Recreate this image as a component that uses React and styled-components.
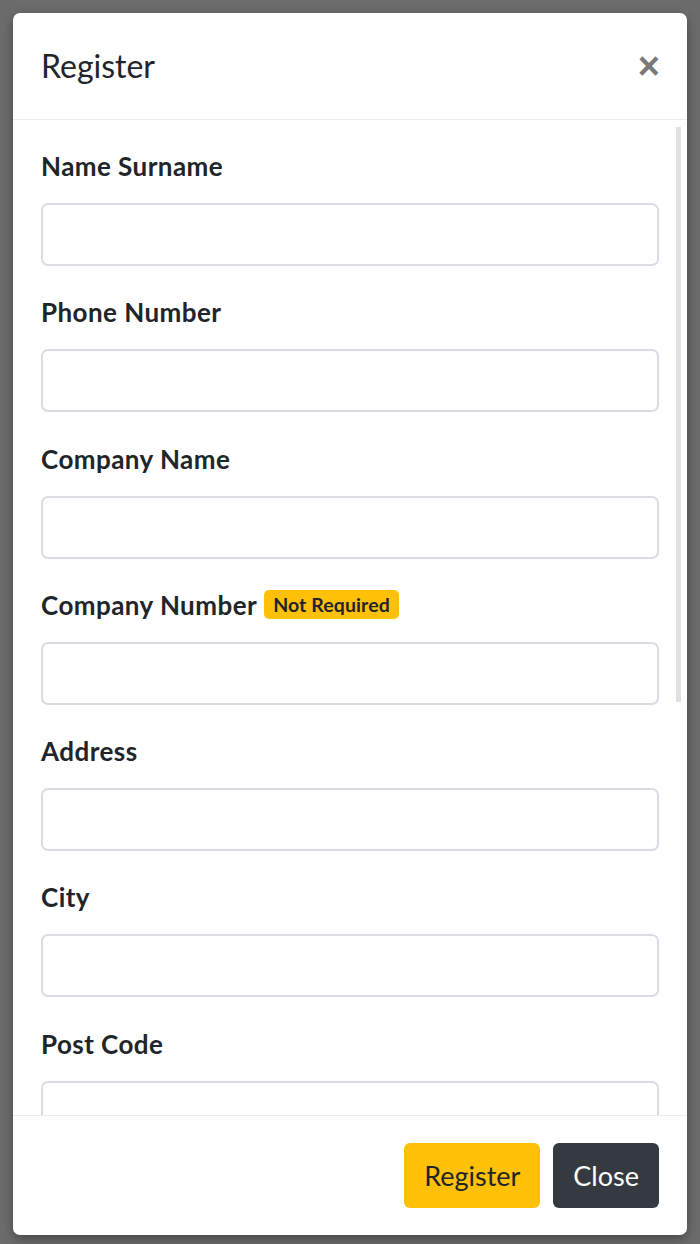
import React from 'react';
import styled, { createGlobalStyle } from 'styled-components';

const GlobalStyle = createGlobalStyle`
  html, body {
    margin: 0;
    padding: 0;
    background: #6c6c6c;
  }
  * {
    box-sizing: border-box;
  }
`;

const Backdrop = styled.div`
  height: 1244px;
  padding: 13px 13px 9px 13px;
  font-family: 'Lato', 'Liberation Sans', sans-serif;
  color: #212529;
`;

const Modal = styled.div`
  height: 100%;
  display: flex;
  flex-direction: column;
  background: #fff;
  border-radius: 7px;
  overflow: hidden;
  box-shadow: 0 4px 12px rgba(0, 0, 0, 0.35);
`;

const Header = styled.div`
  height: 107px;
  flex: none;
  display: flex;
  align-items: center;
  justify-content: space-between;
  padding: 0 28px;
  border-bottom: 1px solid #e9ecef;
`;

const Title = styled.h5`
  margin: 0;
  font-size: 32px;
  font-weight: 400;
  line-height: 1.2;
`;

const CloseX = styled.button`
  border: none;
  background: none;
  padding: 0;
  margin-right: -1px;
  font-family: 'Liberation Sans', sans-serif;
  font-size: 38px;
  font-weight: 700;
  line-height: 1;
  color: #7a7a7a;
  cursor: pointer;
`;

const BodyWrap = styled.div`
  flex: 1;
  position: relative;
  overflow: hidden;
`;

const Scroll = styled.div`
  height: 100%;
  overflow: hidden;
  padding: 28px 28px 40px 28px;
`;

/* scrollbar thumb drawn over the body */
const Thumb = styled.div`
  position: absolute;
  top: 7px;
  right: 6px;
  width: 5px;
  height: 575px;
  background: #e2e2e2;
`;

const Field = styled.div`
  margin-bottom: 28.3px;
`;

const Label = styled.label`
  display: flex;
  align-items: center;
  gap: 7px;
  font-size: 26px;
  font-weight: 700;
  letter-spacing: 0.45px;
  line-height: 36px;
  margin-bottom: 19px;
`;

const Badge = styled.span`
  display: inline-block;
  background: #ffc107;
  color: #212529;
  font-size: 19.5px;
  font-weight: 700;
  letter-spacing: 0.1px;
  line-height: 29px;
  padding: 0 9px;
  border-radius: 5px;
`;

const Input = styled.input`
  display: block;
  width: 100%;
  height: 63px;
  border: 2px solid #d9dde3;
  border-radius: 7px;
  padding: 0 18px;
  font-size: 24px;
  font-family: inherit;
  outline: none;
`;

const Footer = styled.div`
  height: 120px;
  flex: none;
  display: flex;
  align-items: center;
  justify-content: flex-end;
  gap: 13px;
  padding: 0 28px;
  border-top: 1px solid #e9ecef;
`;

const Button = styled.button`
  height: 65px;
  padding: 0 20px;
  border: none;
  border-radius: 6px;
  font-family: inherit;
  font-size: 27px;
  background: ${(p) => (p.$dark ? '#343a40' : '#ffc107')};
  color: ${(p) => (p.$dark ? '#fff' : '#212529')};
  cursor: pointer;
`;

const fields = [
  { label: 'Name Surname' },
  { label: 'Phone Number' },
  { label: 'Company Name' },
  { label: 'Company Number', optional: true },
  { label: 'Address' },
  { label: 'City' },
  { label: 'Post Code' },
  { label: 'E-mail' },
  { label: 'Password' },
  { label: 'Password Again' },
  { label: 'Country' },
];

export default function App() {
  return (
    <>
      <GlobalStyle />
      <Backdrop>
        <Modal>
          <Header>
            <Title>Register</Title>
            <CloseX aria-label="Close">×</CloseX>
          </Header>
          <BodyWrap>
            <Scroll>
              {fields.map((f) => (
                <Field key={f.label}>
                  <Label>
                    {f.label}
                    {f.optional && <Badge>Not Required</Badge>}
                  </Label>
                  <Input type="text" />
                </Field>
              ))}
            </Scroll>
            <Thumb />
          </BodyWrap>
          <Footer>
            <Button>Register</Button>
            <Button $dark>Close</Button>
          </Footer>
        </Modal>
      </Backdrop>
    </>
  );
}
